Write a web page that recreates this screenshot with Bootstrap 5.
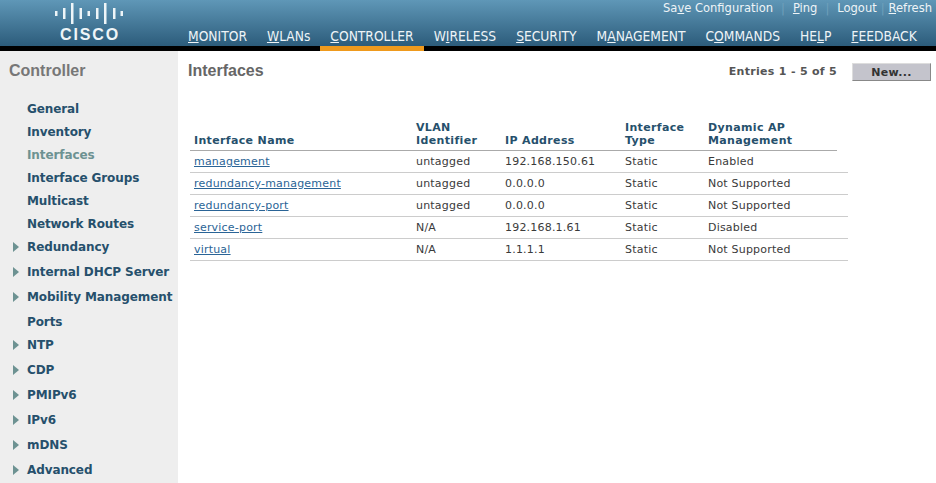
<!DOCTYPE html>
<html lang="en"><head><meta charset="utf-8"><title>Interfaces</title>
<link href="https://cdn.jsdelivr.net/npm/bootstrap@5.3.0/dist/css/bootstrap.min.css" rel="stylesheet">
<style>
html,body{height:483px;overflow:hidden;background:#fff}
body{font:11px/14px "DejaVu Sans",sans-serif;color:#333}
.wlc-top{height:46px;background:linear-gradient(#5f97b7,#2c5c7b);position:relative}
.wlc-band{height:5px;background:#000}
.wlc-logo{width:188px;flex:none;padding:3px 0 0 55px}
.wlc-logo svg{display:block}
.wlc-word{font:bold 16px/16px "Liberation Sans",sans-serif;letter-spacing:1.9px;color:#eef5f8;margin:2px 0 0 5px}
.wlc-right{flex:1;min-width:0}
.wlc-links{height:17px;font:12.8px/16px "DejaVu Sans Condensed","DejaVu Sans",sans-serif;padding-right:4px;justify-content:flex-end}
.wlc-links a,.wlc-menu a{color:#eef4f7;text-decoration:none}
.wlc-sep{color:#6fa0bb;margin:0 8px}
.wlc-sep.wlc-near{margin:0 4px}
.wlc-menu{height:34px;margin-left:-10px}
.wlc-menu a{font:13.7px/16px "DejaVu Sans Condensed","DejaVu Sans",sans-serif;height:34px;padding:11px 10px 0;white-space:nowrap}
.wlc-on{position:relative}
.wlc-on::after{content:"";position:absolute;left:0;right:0;top:29px;height:5px;background:#ef9a1d}
.wlc-body{height:432px}
.wlc-side{width:178px;flex:none;background:#eee;padding:11px 0 0}
.wlc-side h2{font:bold 16px/18px "Liberation Sans",sans-serif;color:#777;margin:0 0 17px 9px}
.wlc-item{display:flex;align-items:center;height:23px;padding-left:27px;font:bold 12px/16px "DejaVu Sans",sans-serif;color:#26506c;position:relative;white-space:nowrap;letter-spacing:-.1px}
.wlc-item.wlc-tall{height:25px}
.wlc-item.wlc-up{margin-top:-1px}
.wlc-item.wlc-snug{margin-bottom:-2px}
.wlc-item.wlc-cur{color:#6d9292}
.wlc-arrow::before{content:"";position:absolute;left:13px;top:50%;margin-top:-5px;border-left:6px solid #6d9292;border-top:5px solid transparent;border-bottom:5px solid transparent}
.wlc-main{flex:1;min-width:0;padding:11px 5px 0 10px}
.wlc-main h1{font:bold 16px/18px "Liberation Sans",sans-serif;color:#666;margin:0}
.wlc-count{font:bold 11px/18px "DejaVu Sans",sans-serif;color:#555;margin:1px 15px 0 0;letter-spacing:.3px}
.wlc-new{width:79px;height:18px;padding:0;margin-top:1px;background:#c4c4cc;border:1px solid;border-color:#ddd #888 #888 #ddd;border-radius:0;font:bold 11px/15px "DejaVu Sans",sans-serif;color:#333;letter-spacing:.3px}
.wlc-tbl{width:658px;margin:37px 0 0 2px;table-layout:fixed;border-collapse:collapse;font-size:11px;letter-spacing:.2px}
.wlc-tbl th,.wlc-tbl td{padding:0 4px;background:transparent;color:#3a3a3a;font-weight:400;height:22px;border-bottom:1px solid #ccc;box-shadow:none}
.wlc-tbl thead th{font-weight:700;color:#26506c;line-height:13px;vertical-align:bottom;padding-bottom:3px;border-bottom:1px solid #aaa;height:32px;letter-spacing:.35px}
.wlc-tbl thead th.wlc-gap{border-bottom:0}
.wlc-tbl a{color:#2a6496}
.wlc-tbl td{vertical-align:middle;padding-top:2px}
</style></head><body>
<header class="wlc-top d-flex">
<div class="wlc-logo">
<svg width="70" height="22" viewBox="0 0 70 22" fill="#eef5f8"><rect x="0" y="8" width="2.500" height="5"/><rect x="8" y="5" width="2.500" height="11"/><rect x="16" y="0" width="2.500" height="21"/><rect x="24.500" y="5" width="2.500" height="11"/><rect x="32.500" y="8" width="2.500" height="5"/><rect x="41" y="5" width="2.500" height="11"/><rect x="49" y="0" width="2.500" height="21"/><rect x="58" y="5" width="2.500" height="11"/><rect x="65.500" y="8" width="2.500" height="5"/></svg>
<div class="wlc-word">CISCO</div>
</div>
<div class="wlc-right">
<div class="wlc-links d-flex"><a href="#">Sa<u>v</u>e Configuration</a><span class="wlc-sep">|</span><a href="#"><u>P</u>ing</a><span class="wlc-sep">|</span><a href="#">Lo<u>g</u>out</a><span class="wlc-sep wlc-near">|</span><a href="#"><u>R</u>efresh</a></div>
<nav class="wlc-menu d-flex">
<a href="#"><u>M</u>ONITOR</a><a href="#"><u>W</u>LANs</a><a href="#" class="wlc-on"><u>C</u>ONTROLLER</a><a href="#">W<u>I</u>RELESS</a><a href="#"><u>S</u>ECURITY</a><a href="#">M<u>A</u>NAGEMENT</a><a href="#">C<u>O</u>MMANDS</a><a href="#">HE<u>L</u>P</a><a href="#"><u>F</u>EEDBACK</a>
</nav>
</div>
</header>
<div class="wlc-band"></div>
<div class="wlc-body d-flex">
<aside class="wlc-side">
<h2>Controller</h2>
<div class="wlc-item">General</div>
<div class="wlc-item">Inventory</div>
<div class="wlc-item wlc-cur">Interfaces</div>
<div class="wlc-item">Interface Groups</div>
<div class="wlc-item">Multicast</div>
<div class="wlc-item">Network Routes</div>
<div class="wlc-item wlc-arrow wlc-tall wlc-up">Redundancy</div>
<div class="wlc-item wlc-arrow wlc-tall">Internal DHCP Server</div>
<div class="wlc-item wlc-arrow wlc-tall">Mobility Management</div>
<div class="wlc-item wlc-tall wlc-snug">Ports</div>
<div class="wlc-item wlc-arrow wlc-tall">NTP</div>
<div class="wlc-item wlc-arrow wlc-tall">CDP</div>
<div class="wlc-item wlc-arrow wlc-tall">PMIPv6</div>
<div class="wlc-item wlc-arrow wlc-tall">IPv6</div>
<div class="wlc-item wlc-arrow wlc-tall">mDNS</div>
<div class="wlc-item wlc-arrow wlc-tall">Advanced</div>
</aside>
<main class="wlc-main">
<div class="d-flex align-items-start">
<h1 class="me-auto">Interfaces</h1>
<div class="wlc-count">Entries 1 - 5 of 5</div>
<button class="btn wlc-new" type="button">New...</button>
</div>
<table class="table wlc-tbl">
<colgroup><col style="width:222px"><col style="width:89px"><col style="width:120px"><col style="width:83px"><col style="width:133px"><col style="width:11px"></colgroup>
<thead><tr><th>Interface Name</th><th>VLAN<br>Identifier</th><th>IP Address</th><th>Interface<br>Type</th><th>Dynamic AP<br>Management</th><th class="wlc-gap"></th></tr></thead>
<tbody>
<tr><td><a href="#">management</a></td><td>untagged</td><td>192.168.150.61</td><td>Static</td><td>Enabled</td><td></td></tr>
<tr><td><a href="#">redundancy-management</a></td><td>untagged</td><td>0.0.0.0</td><td>Static</td><td>Not Supported</td><td></td></tr>
<tr><td><a href="#">redundancy-port</a></td><td>untagged</td><td>0.0.0.0</td><td>Static</td><td>Not Supported</td><td></td></tr>
<tr><td><a href="#">service-port</a></td><td>N/A</td><td>192.168.1.61</td><td>Static</td><td>Disabled</td><td></td></tr>
<tr><td><a href="#">virtual</a></td><td>N/A</td><td>1.1.1.1</td><td>Static</td><td>Not Supported</td><td></td></tr>
</tbody></table>
</main>
</div>
<script src="https://cdn.jsdelivr.net/npm/bootstrap@5.3.0/dist/js/bootstrap.bundle.min.js"></script>
</body></html>
